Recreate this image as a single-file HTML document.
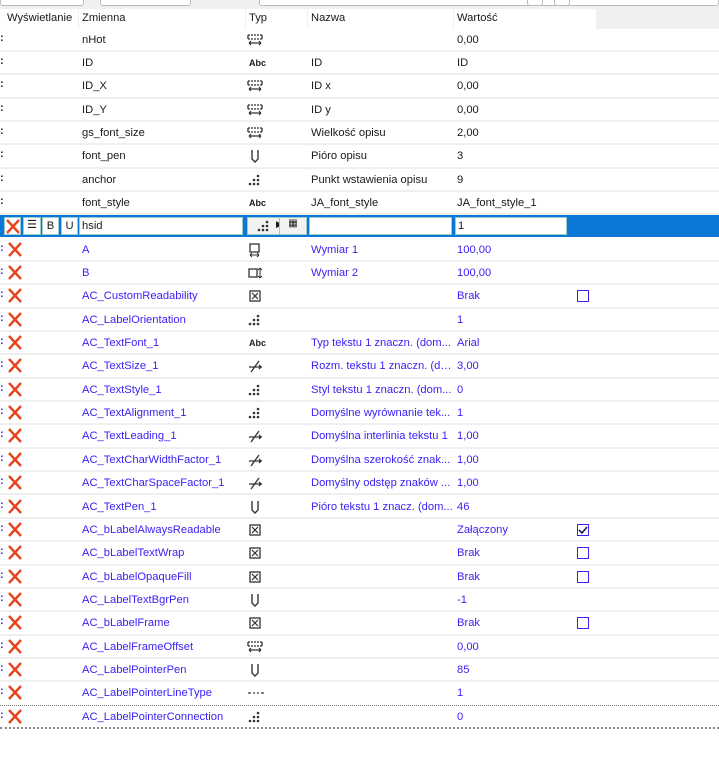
<!DOCTYPE html>
<html><head><meta charset="utf-8"><style>
*{margin:0;padding:0;box-sizing:border-box}
body{width:719px;height:757px;background:#fff;font-family:"Liberation Sans",sans-serif;font-size:11.2px;color:#1a1a1a;position:relative;overflow:hidden}
.top{position:absolute;left:0;top:0;width:719px;height:9px;background:#f0f0f0}
.top div{position:absolute;top:-4px;height:10px;border:1px solid #bbb;border-radius:3px;background:#fff}
.hdr{position:absolute;top:9px;left:0;width:596px;height:20px;background:#fff}
.hdrg{position:absolute;top:9px;left:596px;width:123px;height:20px;background:#f0f0f0}
.h{position:absolute;top:12px}
.hs{position:absolute;top:9px;width:1px;height:20px;background:#f0f0f0}
.r{position:absolute;left:0;width:719px;height:23.35px;border-bottom:2px solid #efefef}
.r span{position:absolute;top:5px;white-space:nowrap}
.b span{color:#3b22f5}
.d{left:0;top:3px!important;font-weight:bold;font-size:11px;color:#222}
.c1{left:82px}.c3{left:311px;max-width:142px;overflow:hidden;text-overflow:ellipsis}.c4{left:457px}
.ic{position:absolute;left:247px;top:4px}
.x{position:absolute;left:7px;top:3px}
.cb{position:absolute;left:577px;top:5px;width:12px;height:12px;border:1.3px solid #3b22f5}
.sel{position:absolute;top:215px;left:0;width:719px;height:22px;background:#0a78d4}
.sel div{position:absolute;top:2px;height:18px;background:#fff;border:1px solid #9cc}
</style></head><body>
<div class="top"><div style="left:0;width:84px"></div><div style="left:100px;width:91px"></div><div style="left:259px;width:460px"></div><div style="left:527px;width:16px"></div><div style="left:554px;width:16px"></div></div>
<div class="hdr"></div><div class="hdrg"></div>
<span class="h" style="left:7px">Wyświetlanie</span><div class="hs" style="left:78px"></div>
<span class="h" style="left:82px">Zmienna</span><div class="hs" style="left:245px"></div>
<span class="h" style="left:249px">Typ</span><div class="hs" style="left:307px"></div>
<span class="h" style="left:311px">Nazwa</span><div class="hs" style="left:453px"></div>
<span class="h" style="left:457px">Wartość</span>

<svg width="0" height="0" style="position:absolute"><defs>
<g id="num"><path d="M1 2h2M4 2h2M7 2h2M10 2h2M13 2h2M1 2v4M15 2v4M1 6h2M4 6h2M7 6h2M10 6h2M13 6h2" stroke="#333" stroke-width="1.3" fill="none"/><path d="M2 10h12M2 10l2-2M2 10l2 2M14 10l-2-2M14 10l-2 2" stroke="#333" stroke-width="1.2" fill="none"/></g>
<g id="pen"><path d="M5 1v9l3 3l3-3V1" stroke="#333" stroke-width="1.4" fill="none"/></g>
<g id="dots" fill="#333"><circle cx="11" cy="3" r="1.3"/><circle cx="11" cy="7" r="1.3"/><circle cx="7" cy="7" r="1.3"/><circle cx="11" cy="11" r="1.3"/><circle cx="7" cy="11" r="1.3"/><circle cx="3" cy="11" r="1.3"/></g>
<g id="bool"><rect x="3" y="2" width="10" height="10" fill="none" stroke="#333" stroke-width="1.3"/><path d="M5 4l6 6M11 4l-6 6" stroke="#333" stroke-width="1.2"/></g>
<g id="ang"><path d="M2 8h13M12 6l2 2l-2 2M4 13L12 2" stroke="#333" stroke-width="1.3" fill="none"/></g>
<g id="xx"><path d="M2 1l12 13M14 1L2 14" stroke="#e8431e" stroke-width="2.4"/></g>
</defs></svg>

<div class="r" style="top:28.5px"><span class="d">:</span><span class="c1">nHot</span><svg class="ic" width="16" height="14"><use href="#num"/></svg><span class="c4">0,00</span></div>
<div class="r" style="top:51.85px"><span class="d">:</span><span class="c1">ID</span><span style="left:249px;font-size:9px;font-weight:bold;top:6px">Abc</span><span class="c3">ID</span><span class="c4">ID</span></div>
<div class="r" style="top:75.2px"><span class="d">:</span><span class="c1">ID_X</span><svg class="ic" width="16" height="14"><use href="#num"/></svg><span class="c3">ID x</span><span class="c4">0,00</span></div>
<div class="r" style="top:98.55px"><span class="d">:</span><span class="c1">ID_Y</span><svg class="ic" width="16" height="14"><use href="#num"/></svg><span class="c3">ID y</span><span class="c4">0,00</span></div>
<div class="r" style="top:121.9px"><span class="d">:</span><span class="c1">gs_font_size</span><svg class="ic" width="16" height="14"><use href="#num"/></svg><span class="c3">Wielkość opisu</span><span class="c4">2,00</span></div>
<div class="r" style="top:145.25px"><span class="d">:</span><span class="c1">font_pen</span><svg class="ic" width="16" height="14"><use href="#pen"/></svg><span class="c3">Pióro opisu</span><span class="c4">3</span></div>
<div class="r" style="top:168.6px"><span class="d">:</span><span class="c1">anchor</span><svg class="ic" width="16" height="14"><use href="#dots"/></svg><span class="c3">Punkt wstawienia opisu</span><span class="c4">9</span></div>
<div class="r" style="top:191.95px"><span class="d">:</span><span class="c1">font_style</span><span style="left:249px;font-size:9px;font-weight:bold;top:6px">Abc</span><span class="c3">JA_font_style</span><span class="c4">JA_font_style_1</span></div>

<div class="sel">
<div style="left:4px;width:17px"><svg width="15" height="15" style="position:absolute;left:0;top:1px"><use href="#xx"/></svg></div>
<div style="left:23px;width:18px;font-size:11px;text-align:center">☰</div>
<div style="left:42px;width:17px;text-align:center;line-height:16px">B</div>
<div style="left:61px;width:17px;text-align:center;line-height:16px">U</div>
<div style="left:79px;width:164px;line-height:16px;padding-left:2px">hsid</div>
<div style="left:247px;width:43px;background:#f2f2f2"><svg width="16" height="14" style="position:absolute;left:8px;top:1px"><use href="#dots"/></svg><span style="position:absolute;left:28px;top:1px;font-size:9px">▶</span></div>
<div style="left:279px;width:28px;background:#f2f2f2;font-size:10px;text-align:center">▦</div>
<div style="left:309px;width:143px"></div>
<div style="left:455px;width:112px;line-height:16px;padding-left:2px">1</div>
</div>

<div class="r b" style="top:238.65px"><span class="d">:</span><svg class="x" width="15" height="15"><use href="#xx"/></svg><span class="c1">A</span><svg class="ic" width="16" height="15"><rect x="3" y="1" width="9" height="8" fill="none" stroke="#333" stroke-width="1.3"/><path d="M3 12h9M3 12l2-2M3 12l2 2M12 12l-2-2M12 12l-2 2" stroke="#333" fill="none"/></svg><span class="c3">Wymiar 1</span><span class="c4">100,00</span></div>
<div class="r b" style="top:262px"><span class="d">:</span><svg class="x" width="15" height="15"><use href="#xx"/></svg><span class="c1">B</span><svg class="ic" width="16" height="14"><rect x="2" y="3" width="8" height="8" fill="none" stroke="#333" stroke-width="1.3"/><path d="M13 2v10M13 2l-2 2M13 2l2 2M13 12l-2-2M13 12l2-2" stroke="#333" fill="none"/></svg><span class="c3">Wymiar 2</span><span class="c4">100,00</span></div>
<div class="r b" style="top:285.35px"><span class="d">:</span><svg class="x" width="15" height="15"><use href="#xx"/></svg><span class="c1">AC_CustomReadability</span><svg class="ic" width="16" height="14"><use href="#bool"/></svg><span class="c4">Brak</span><div class="cb"></div></div>
<div class="r b" style="top:308.7px"><span class="d">:</span><svg class="x" width="15" height="15"><use href="#xx"/></svg><span class="c1">AC_LabelOrientation</span><svg class="ic" width="16" height="14"><use href="#dots"/></svg><span class="c4">1</span></div>
<div class="r b" style="top:332.05px"><span class="d">:</span><svg class="x" width="15" height="15"><use href="#xx"/></svg><span class="c1">AC_TextFont_1</span><span style="left:249px;font-size:9px;font-weight:bold;top:6px;color:#222">Abc</span><span class="c3">Typ tekstu 1 znaczn. (dom...</span><span class="c4">Arial</span></div>
<div class="r b" style="top:355.4px"><span class="d">:</span><svg class="x" width="15" height="15"><use href="#xx"/></svg><span class="c1">AC_TextSize_1</span><svg class="ic" width="16" height="14"><use href="#ang"/></svg><span class="c3">Rozm. tekstu 1 znaczn. (do...</span><span class="c4">3,00</span></div>
<div class="r b" style="top:378.75px"><span class="d">:</span><svg class="x" width="15" height="15"><use href="#xx"/></svg><span class="c1">AC_TextStyle_1</span><svg class="ic" width="16" height="14"><use href="#dots"/></svg><span class="c3">Styl tekstu 1 znaczn. (dom...</span><span class="c4">0</span></div>
<div class="r b" style="top:402.1px"><span class="d">:</span><svg class="x" width="15" height="15"><use href="#xx"/></svg><span class="c1">AC_TextAlignment_1</span><svg class="ic" width="16" height="14"><use href="#dots"/></svg><span class="c3">Domyślne wyrównanie tek...</span><span class="c4">1</span></div>
<div class="r b" style="top:425.45px"><span class="d">:</span><svg class="x" width="15" height="15"><use href="#xx"/></svg><span class="c1">AC_TextLeading_1</span><svg class="ic" width="16" height="14"><use href="#ang"/></svg><span class="c3">Domyślna interlinia tekstu 1</span><span class="c4">1,00</span></div>
<div class="r b" style="top:448.8px"><span class="d">:</span><svg class="x" width="15" height="15"><use href="#xx"/></svg><span class="c1">AC_TextCharWidthFactor_1</span><svg class="ic" width="16" height="14"><use href="#ang"/></svg><span class="c3">Domyślna szerokość znak...</span><span class="c4">1,00</span></div>
<div class="r b" style="top:472.15px"><span class="d">:</span><svg class="x" width="15" height="15"><use href="#xx"/></svg><span class="c1">AC_TextCharSpaceFactor_1</span><svg class="ic" width="16" height="14"><use href="#ang"/></svg><span class="c3">Domyślny odstęp znaków ...</span><span class="c4">1,00</span></div>
<div class="r b" style="top:495.5px"><span class="d">:</span><svg class="x" width="15" height="15"><use href="#xx"/></svg><span class="c1">AC_TextPen_1</span><svg class="ic" width="16" height="14"><use href="#pen"/></svg><span class="c3">Pióro tekstu 1 znacz. (dom...</span><span class="c4">46</span></div>
<div class="r b" style="top:518.85px"><span class="d">:</span><svg class="x" width="15" height="15"><use href="#xx"/></svg><span class="c1">AC_bLabelAlwaysReadable</span><svg class="ic" width="16" height="14"><use href="#bool"/></svg><span class="c4">Załączony</span><div class="cb"><svg width="10" height="10" style="position:absolute;left:0;top:0"><path d="M1 5l3 3l5-6" stroke="#1a1a60" stroke-width="1.6" fill="none"/></svg></div></div>
<div class="r b" style="top:542.2px"><span class="d">:</span><svg class="x" width="15" height="15"><use href="#xx"/></svg><span class="c1">AC_bLabelTextWrap</span><svg class="ic" width="16" height="14"><use href="#bool"/></svg><span class="c4">Brak</span><div class="cb"></div></div>
<div class="r b" style="top:565.55px"><span class="d">:</span><svg class="x" width="15" height="15"><use href="#xx"/></svg><span class="c1">AC_bLabelOpaqueFill</span><svg class="ic" width="16" height="14"><use href="#bool"/></svg><span class="c4">Brak</span><div class="cb"></div></div>
<div class="r b" style="top:588.9px"><span class="d">:</span><svg class="x" width="15" height="15"><use href="#xx"/></svg><span class="c1">AC_LabelTextBgrPen</span><svg class="ic" width="16" height="14"><use href="#pen"/></svg><span class="c4">-1</span></div>
<div class="r b" style="top:612.25px"><span class="d">:</span><svg class="x" width="15" height="15"><use href="#xx"/></svg><span class="c1">AC_bLabelFrame</span><svg class="ic" width="16" height="14"><use href="#bool"/></svg><span class="c4">Brak</span><div class="cb"></div></div>
<div class="r b" style="top:635.6px"><span class="d">:</span><svg class="x" width="15" height="15"><use href="#xx"/></svg><span class="c1">AC_LabelFrameOffset</span><svg class="ic" width="16" height="14"><use href="#num"/></svg><span class="c4">0,00</span></div>
<div class="r b" style="top:658.95px"><span class="d">:</span><svg class="x" width="15" height="15"><use href="#xx"/></svg><span class="c1">AC_LabelPointerPen</span><svg class="ic" width="16" height="14"><use href="#pen"/></svg><span class="c4">85</span></div>
<div class="r b" style="top:682.3px;border-bottom:1px dotted #777"><span class="d">:</span><svg class="x" width="15" height="15"><use href="#xx"/></svg><span class="c1">AC_LabelPointerLineType</span><svg class="ic" width="18" height="14"><path d="M1 7h3M6 7h2M10 7h2M14 7h3" stroke="#333" stroke-width="1.2"/></svg><span class="c4">1</span></div>
<div class="r b" style="top:705.65px;border-bottom:2px dotted #888"><span class="d">:</span><svg class="x" width="15" height="15"><use href="#xx"/></svg><span class="c1">AC_LabelPointerConnection</span><svg class="ic" width="16" height="14"><use href="#dots"/></svg><span class="c4">0</span></div>
</body></html>
